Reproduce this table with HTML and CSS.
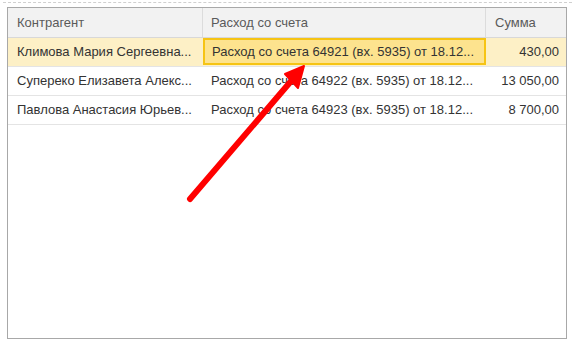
FILE: index.html
```html
<!DOCTYPE html>
<html>
<head>
<meta charset="utf-8">
<link rel="stylesheet" href="styles.css">
</head>
<body>
<div class="page">
  <div class="dash"></div>
  <div class="grid">
    <div class="row head">
      <div class="cell c1">Контрагент</div>
      <div class="cell c2">Расход со счета</div>
      <div class="cell c3">Сумма</div>
    </div>
    <div class="row sel">
      <div class="cell c1">Климова Мария Сергеевна...</div>
      <div class="cell c2 cur">Расход со счета 64921 (вх. 5935) от 18.12...</div>
      <div class="cell c3 num">430,00</div>
    </div>
    <div class="row">
      <div class="cell c1">Супереко Елизавета Алекс...</div>
      <div class="cell c2">Расход со счета 64922 (вх. 5935) от 18.12...</div>
      <div class="cell c3 num">13 050,00</div>
    </div>
    <div class="row">
      <div class="cell c1">Павлова Анастасия Юрьев...</div>
      <div class="cell c2">Расход со счета 64923 (вх. 5935) от 18.12...</div>
      <div class="cell c3 num">8 700,00</div>
    </div>
  </div>
  <svg class="arrow" width="572" height="342" viewBox="0 0 572 342">
    <line x1="190" y1="199" x2="292" y2="80" stroke="#ff0000" stroke-width="6" stroke-linecap="round"/>
    <polygon points="304,66 285,74 298,88" fill="#ff0000" stroke="#ff0000" stroke-width="2" stroke-linejoin="round"/>
  </svg>
</div>
</body>
</html>
```

FILE: styles.css
```css
* { box-sizing: border-box; }
html, body { margin: 0; padding: 0; background: #fff; }
body { font-family: Arial, "Liberation Sans", sans-serif; font-size: 13px; }
.page { position: relative; width: 572px; height: 342px; padding: 2px 0 0 3px; }
.dash { height: 0; border-top: 1px dashed #d0d0d0; margin-right: 0; }
.grid {
  margin: 4px 0 0 4px;
  width: 560px;
  height: 332px;
  border: 1px solid #a8a8a8;
  background: #fff;
}
.row { display: flex; height: 29px; border-bottom: 1px solid #e4e4e4; }
.row.head { height: 30px; background: #f2f2f2; border-bottom: 1px solid #d8d8d8; color: #555; }
.row.sel { background: #fdf0c6; }
.cell {
  line-height: 28px;
  padding: 0 8px 0 9px;
  white-space: nowrap;
  overflow: hidden;
  color: #333;
}
.head .cell { color: #5a5a5a; line-height: 29px; border-right: 1px solid #dcdcdc; }
.head .cell:last-child { border-right: none; }
.c1 { width: 195px; }
.c2 { width: 283px; padding-left: 8px; }
.c3 { flex: 1; padding-left: 9px; }
.num { text-align: right; padding-right: 7px; }
.cur {
  background: #fde38e;
  border: 2px solid #f6c414;
  line-height: 24px;
  padding-left: 7px;
  margin: 0 1px 1px 0;
}
.arrow { position: absolute; left: 0; top: 0; pointer-events: none; }
```
